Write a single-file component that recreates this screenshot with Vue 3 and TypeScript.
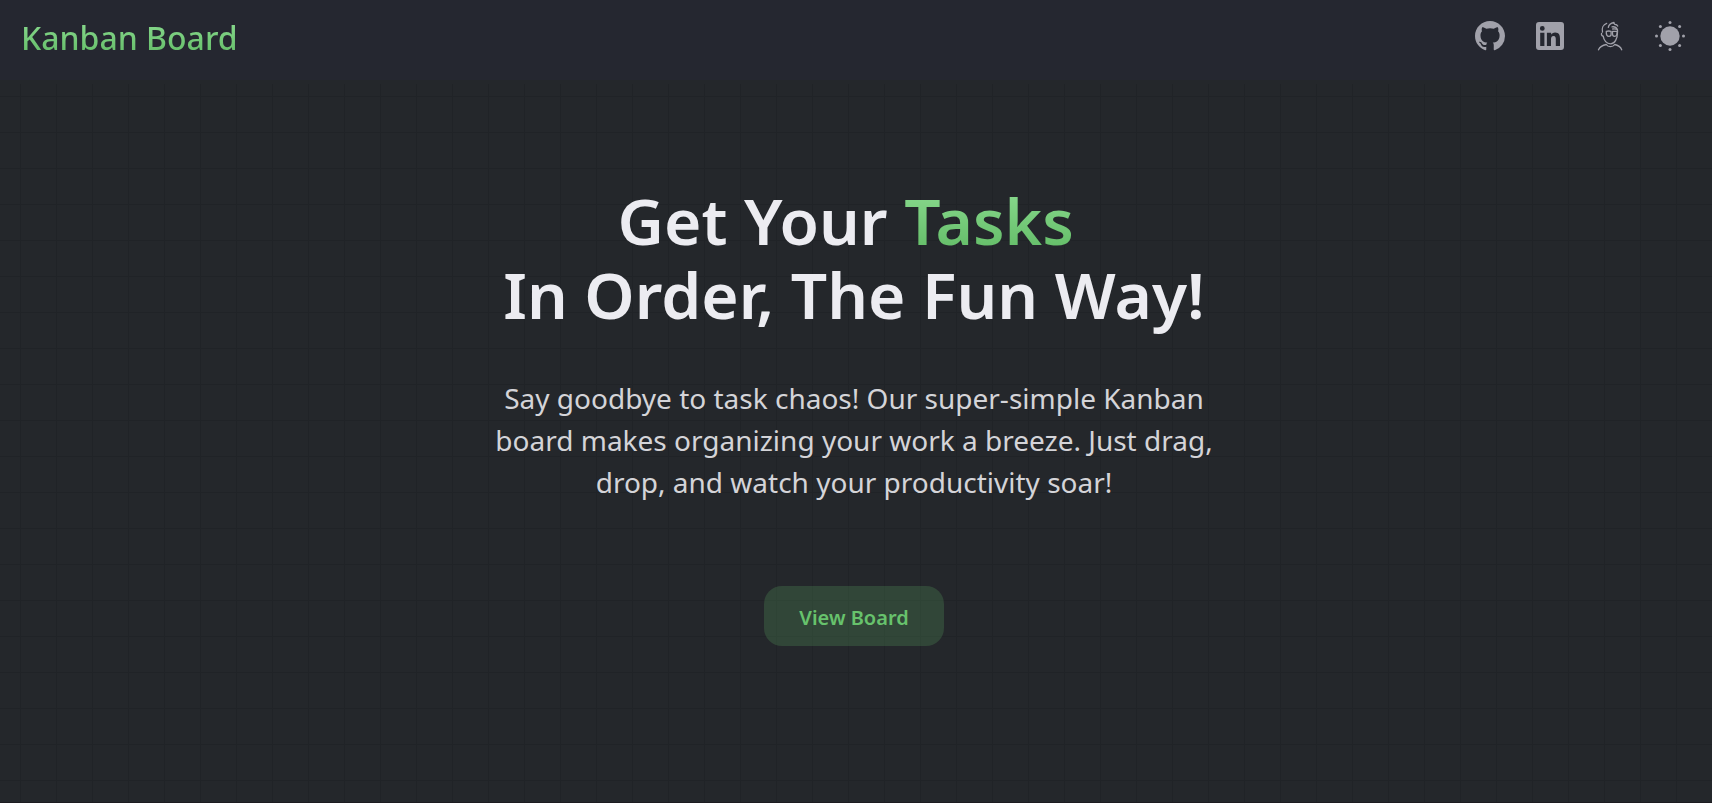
<script setup lang="ts">
import { ref } from 'vue'

const themeLabel = ref('Toggle theme')
</script>

<template>
  <div class="page">
    <header class="header">
      <a class="logo" href="#">Kanban Board</a>
      <nav class="nav" aria-label="Links">
        <a class="icon" href="#github" aria-label="GitHub">
          <svg viewBox="0 0 16 16" fill="currentColor">
            <path d="M8 0C3.58 0 0 3.58 0 8c0 3.54 2.29 6.53 5.47 7.59.4.07.55-.17.55-.38 0-.19-.01-.82-.01-1.49-2.01.37-2.53-.49-2.69-.94-.09-.23-.48-.94-.82-1.13-.28-.15-.68-.52-.01-.53.63-.01 1.08.58 1.23.82.72 1.21 1.87.87 2.33.66.07-.52.28-.87.51-1.07-1.78-.2-3.64-.89-3.64-3.95 0-.87.31-1.59.82-2.15-.08-.2-.36-1.02.08-2.12 0 0 .67-.21 2.2.82.64-.18 1.32-.27 2-.27s1.36.09 2 .27c1.53-1.04 2.2-.82 2.2-.82.44 1.1.16 1.92.08 2.12.51.56.82 1.27.82 2.15 0 3.07-1.87 3.75-3.65 3.95.29.25.54.73.54 1.48 0 1.07-.01 1.93-.01 2.2 0 .21.15.46.55.38A8.01 8.01 0 0 0 16 8c0-4.42-3.58-8-8-8z" />
          </svg>
        </a>
        <a class="icon" href="#linkedin" aria-label="LinkedIn">
          <svg viewBox="0 0 30 30" fill="currentColor">
            <path fill-rule="evenodd" d="M4 1h22a3 3 0 0 1 3 3v22a3 3 0 0 1-3 3H4a3 3 0 0 1-3-3V4a3 3 0 0 1 3-3zM7.300 5a2.400 2.400 0 1 0 0 4.800 2.400 2.400 0 0 0 0-4.800zM5.200 11.700v13.200h4.200V11.700zM11.900 11.700v13.200H16v-6.500c0-1.800.4-3.500 2.600-3.500 2.100 0 2.200 2 2.200 3.600v6.400H25v-7.200c0-3.500-.8-6.300-4.900-6.300-2 0-3.300 1.100-3.900 2.100h-.1v-1.800z" />
          </svg>
        </a>
        <a class="icon" href="#portfolio" aria-label="Portfolio">
          <svg viewBox="0 0 30 30" fill="none" stroke="currentColor" stroke-width="1.300" stroke-linecap="round" stroke-linejoin="round">
            <path d="M3.500 28.800c1.500-3.300 4-4.700 7.800-5.300 1.700 2.900 6.500 2.900 8.400 0 3.700.7 5.800 2.200 7 5.300" />
            <path d="M6.600 12.300c-.5 1.200.2 2.600 1.600 2.900.5 4.300 3.500 7.600 7.400 7.600 4.300 0 6.900-5.100 6.900-11.800V9" />
            <path d="M7.500 11c-.9-3.800.6-7.500 4.200-8.700" />
            <path d="M13.300 6.300c.4-2.400 2-4.100 5.700-5-.3 1.300.4 1.700 1 2.100 1.200.1 2.300.8 2.700 1.700" />
            <path d="M17 5.800c2.200-.3 4.400.6 5.400 2.700-1.700-.6-3.200-.7-4.700-.5" />
            <path d="M11.300 10.300c1.600-.4 3.200-.4 4.800 0v3c0 1.300-.8 2.100-2.100 2.100-2.100 0-2.900-1.700-2.700-5.100z" />
            <path d="M17.500 10.300h4.700c.2 3.300-.6 5.100-2.600 5.100-1.400 0-2.100-1-2.100-2.300z" />
          </svg>
        </a>
        <button class="icon" type="button" :aria-label="themeLabel">
          <svg viewBox="0 0 30 30" fill="currentColor">
            <circle cx="15" cy="15" r="9.700" />
            <circle cx="15" cy="1.500" r="1.500" /><circle cx="15" cy="28.500" r="1.500" />
            <circle cx="1.500" cy="15" r="1.500" /><circle cx="28.500" cy="15" r="1.500" />
            <circle cx="5.400" cy="5.400" r="1.500" /><circle cx="24.600" cy="5.400" r="1.500" />
            <circle cx="5.400" cy="24.600" r="1.500" /><circle cx="24.600" cy="24.600" r="1.500" />
          </svg>
        </button>
      </nav>
    </header>
    <main class="hero">
      <h1 class="title">Get Your <span class="accent">Tasks</span>&nbsp;<br>In Order, The Fun Way!</h1>
      <p class="lead">Say goodbye to task chaos! Our super-simple Kanban board makes organizing your work a breeze. Just drag, drop, and watch your productivity soar!</p>
      <button class="cta" type="button">View Board</button>
    </main>
  </div>
</template>

<style>
body {
  margin: 0;
  background: #24272b;
}
</style>

<style scoped>
.page {
  display: flex;
  flex-direction: column;
  box-sizing: border-box;
  min-height: 100vh;
  border-bottom: 1px solid #1c1b20;
  font-family: "Noto Sans", "Open Sans", sans-serif;
}

.header {
  display: flex;
  align-items: center;
  justify-content: space-between;
  box-sizing: border-box;
  height: 80px;
  padding: 0 27px 4px 21px;
  background: #252730;
}

.logo {
  font-size: 32px;
  font-weight: 500;
  line-height: 48px;
  text-decoration: none;
}

.logo,
.accent {
  color: transparent;
  background: linear-gradient(#8bdb90 10%, #61bb65 90%);
  background-clip: text;
}

.nav {
  display: flex;
  align-items: center;
  gap: 30px;
  padding-bottom: 4px;
}

.icon {
  display: block;
  width: 30px;
  height: 30px;
  padding: 0;
  border: 0;
  background: none;
  color: #a1a1aa;
  cursor: pointer;
}

.icon svg {
  display: block;
  width: 100%;
  height: 100%;
}

.hero {
  display: flex;
  flex: 1;
  flex-direction: column;
  align-items: center;
  margin-top: 4px;
  padding: 100px 24px 36px 20px;
  background-image:
    linear-gradient(#202327 1px, transparent 1px),
    linear-gradient(90deg, #202327 1px, transparent 1px);
  background-position: 20px 12px;
  background-size: 36px 36px;
}

.title {
  margin: 0;
  color: #ececf1;
  font-size: 64px;
  font-weight: 600;
  line-height: 74px;
  text-align: center;
}

.lead {
  max-width: 740px;
  margin: 45px 0 83px;
  color: #d4d4d8;
  font-size: 28px;
  line-height: 42px;
  text-align: center;
}

.cta {
  height: 60px;
  padding: 4px 35px 0;
  border: 0;
  border-radius: 18px;
  background: rgba(103, 194, 108, 0.2);
  color: #67c26c;
  font: 600 20px/30px "Noto Sans", "Open Sans", sans-serif;
  cursor: pointer;
}
</style>
